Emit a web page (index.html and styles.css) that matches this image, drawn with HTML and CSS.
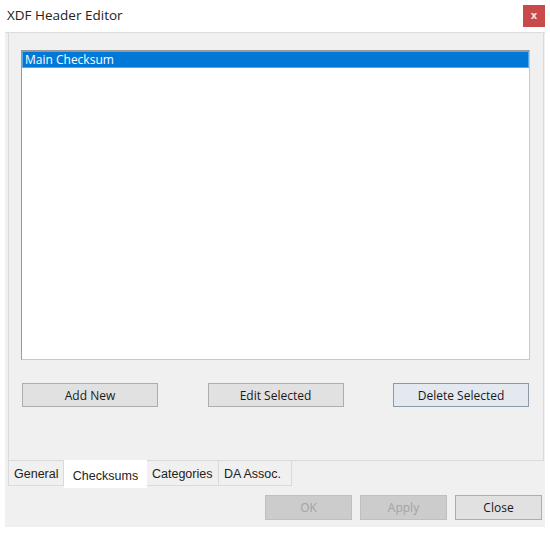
FILE: index.html
```html
<!DOCTYPE html>
<html lang="en">
<head>
  <meta charset="UTF-8">
  <title>XDF Header Editor</title>
  <link rel="stylesheet" href="styles.css">
</head>
<body>
  <div class="window">
    <!-- Title Bar -->
    <div class="titlebar">
      <span class="title">XDF Header Editor</span>
      <button class="close-x">x</button>
    </div>

    <div class="client">
      <!-- Tab Page: Checksums -->
      <div class="tab-page">
        <div class="listbox">
          <div class="list-item selected">Main Checksum</div>
        </div>
        <div class="list-actions">
          <button class="button">Add New</button>
          <button class="button">Edit Selected</button>
          <button class="button default">Delete Selected</button>
        </div>
      </div>

      <!-- Tabs -->
      <div class="tabs">
        <div class="tab">General</div>
        <div class="tab active">Checksums</div>
        <div class="tab">Categories</div>
        <div class="tab">DA Assoc.</div>
      </div>

      <!-- Dialog Buttons -->
      <div class="dialog-actions">
        <button class="button wide" disabled>OK</button>
        <button class="button wide" disabled>Apply</button>
        <button class="button wide">Close</button>
      </div>
    </div>
  </div>
</body>
</html>
```

FILE: styles.css
```css
/* General Reset */
* {
  margin: 0;
  padding: 0;
  box-sizing: border-box;
}

body {
  background-color: #fff;
  font-family: "Open Sans", "Noto Sans", sans-serif;
  color: #1a1a1a;
}

.window {
  width: 550px;
  height: 533px;
}

/* Title Bar */
.titlebar {
  height: 32px;
  display: flex;
  align-items: center;
  justify-content: space-between;
  padding: 0 5px 2px 7px;
}

.title {
  font-size: 13.5px;
  color: #222;
}

.close-x {
  width: 22px;
  height: 22px;
  margin-top: 1px;
  background-color: #c84a4a;
  color: #fbe0e0;
  border: none;
  font-family: "DejaVu Sans", sans-serif;
  font-size: 10px;
  font-weight: bold;
}

/* Client Area */
.client {
  margin: 0 5px 0 5px;
  height: 495px;
  background-color: #f0f0f0;
  border-top: 1px solid #dcdcdc;
}

.tab-page {
  margin-left: 3px;
  width: 536px;
  height: 428px;
  border: 1px solid #dadada;
  border-top: none;
  padding: 17px 0 0 12px;
}

.listbox {
  width: 509px;
  height: 310px;
  background-color: #fff;
  border: 1px solid #9a9a9a;
  border-right-color: #c8c8c8;
  border-bottom-color: #c8c8c8;
  padding: 1px;
}

.list-item {
  height: 15px;
  line-height: 15px;
  font-size: 12px;
  padding-left: 2px;
}

.list-item.selected {
  background-color: #0078d7;
  color: #fff;
  outline: 1px solid #58a8e8;
}

.list-actions {
  display: flex;
  justify-content: space-between;
  width: 507px;
  margin: 23px 0 0 1px;
}

/* Buttons */
.button {
  width: 136px;
  height: 24px;
  background-color: #e1e1e1;
  border: 1px solid #adadad;
  font-family: "Open Sans", "Noto Sans", sans-serif;
  font-size: 12px;
  color: #1a1a1a;
}

.button.default {
  background-color: #e3e9ef;
  border-color: #8c99a6;
}

.button.wide {
  width: 87px;
  height: 25px;
}

.button:disabled {
  background-color: #cccccc;
  border-color: #bfbfbf;
  color: #a3a3a3;
}

/* Tabs */
.tabs {
  display: flex;
  align-items: flex-start;
  margin-left: 3px;
  height: 28px;
}

.tab {
  height: 25px;
  padding: 6px 5px 0 5px;
  font-family: "Liberation Sans", Arial, sans-serif;
  font-size: 12.5px;
  color: #222;
  border: 1px solid #dadada;
  border-top: none;
  border-left: none;
}

.tab:first-child {
  width: 56px;
  border-left: 1px solid #dadada;
}

.tab.active {
  width: 83px;
  height: 28px;
  padding-top: 9px;
  margin-top: -1px;
  background-color: #fff;
  border: none;
  text-align: center;
}

.tab:nth-child(3) {
  width: 72px;
}

.tab:nth-child(4) {
  width: 73px;
}

/* Dialog Buttons */
.dialog-actions {
  display: flex;
  justify-content: flex-end;
  gap: 8px;
  padding: 6px 3px 0 0;
}
```
